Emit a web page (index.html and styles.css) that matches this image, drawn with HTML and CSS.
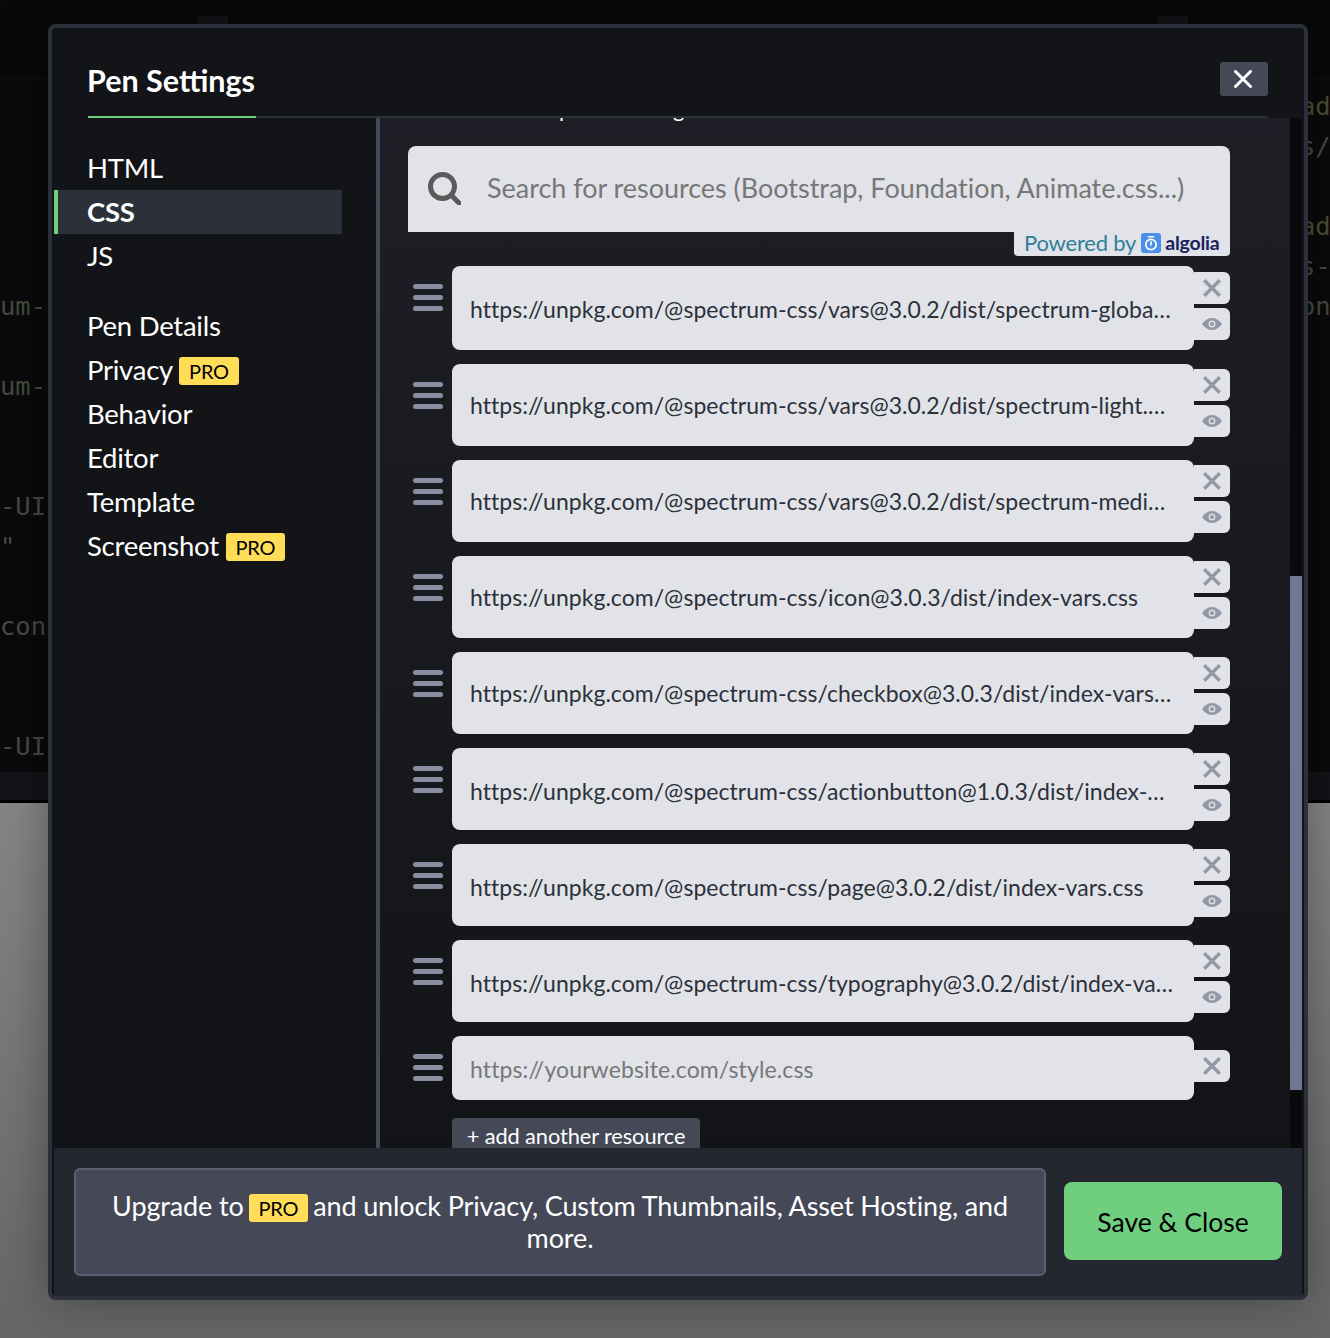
FILE: index.html
```html
<!DOCTYPE html>
<html lang="en">
<head>
<meta charset="utf-8">
<title>Pen Settings</title>
<link rel="stylesheet" href="styles.css">
</head>
<body>
<div class="page">
  <div class="editor">
    <div class="editor-top">
      <span class="stub stub-left"></span>
      <span class="stub stub-right"></span>
    </div>
    <div class="code">
      <pre class="code-left">





um-

um-


-UI
"

con


-UI</pre>
      <pre class="code-right"><span class="code-attr">ad</span>
s/

<span class="code-attr">ad</span>
s-
on</pre>
    </div>
    <div class="resizer"></div>
  </div>
  <div class="preview"></div>

  <section class="modal">
    <header class="modal-head">
      <h1 class="modal-title">Pen Settings</h1>
      <button class="close-btn" aria-label="Close">
        <svg width="18" height="18" viewBox="0 0 18 18"><path d="M1.500 1.500l15 15M16.500 1.500l-15 15" stroke="#fff" stroke-width="3" stroke-linecap="round"/></svg>
      </button>
    </header>
    <div class="modal-body">
      <nav class="side">
        <ul class="nav-group">
          <li class="nav-item">HTML</li>
          <li class="nav-item is-active">CSS</li>
          <li class="nav-item">JS</li>
        </ul>
        <ul class="nav-group">
          <li class="nav-item">Pen Details</li>
          <li class="nav-item">Privacy <span class="pro">PRO</span></li>
          <li class="nav-item">Behavior</li>
          <li class="nav-item">Editor</li>
          <li class="nav-item">Template</li>
          <li class="nav-item">Screenshot <span class="pro">PRO</span></li>
        </ul>
      </nav>
      <div class="panel">
        <div class="panel-inner">
          <p class="intro">Add external CSS pen links to go here</p>
          <div class="search">
            <svg class="search-icon" width="33" height="33" viewBox="0 0 33 33"><circle cx="14.500" cy="14.500" r="12" fill="none" stroke="#5a5a5a" stroke-width="5"/><path d="M23.500 23.500l7.500 7.500" stroke="#5a5a5a" stroke-width="5" stroke-linecap="round"/></svg>
            <span class="search-text">Search for resources (Bootstrap, Foundation, Animate.css...)</span>
          </div>
          <div class="powered-wrap">
            <div class="powered">
              <span class="powered-text">Powered by</span>
              <svg class="algolia-mark" width="20" height="20" viewBox="0 0 20 20"><rect width="20" height="20" rx="3" fill="#4b8fe8"/><circle cx="10" cy="11.500" r="5.200" fill="none" stroke="#fff" stroke-width="1.700"/><path d="M7.500 3.800h5M10 12V8.800" stroke="#fff" stroke-width="1.600" stroke-linecap="round"/></svg>
              <span class="algolia">algolia</span>
            </div>
          </div>
          <ul class="rows">
            <li class="row row-first row-low">
              <span class="handle"><i></i><i></i><i></i></span>
              <div class="url">https://unpkg.com/@spectrum-css/vars@3.0.2/dist/spectrum-global.css</div>
              <div class="row-btns">
                <span class="row-btn"><svg width="18" height="18" viewBox="0 0 18 18"><use href="#x"/></svg></span>
                <span class="row-btn"><svg width="20" height="14" viewBox="0 0 20 14"><use href="#eye"/></svg></span>
              </div>
            </li>
            <li class="row">
              <span class="handle"><i></i><i></i><i></i></span>
              <div class="url">https://unpkg.com/@spectrum-css/vars@3.0.2/dist/spectrum-light.css</div>
              <div class="row-btns">
                <span class="row-btn"><svg width="18" height="18" viewBox="0 0 18 18"><use href="#x"/></svg></span>
                <span class="row-btn"><svg width="20" height="14" viewBox="0 0 20 14"><use href="#eye"/></svg></span>
              </div>
            </li>
            <li class="row">
              <span class="handle"><i></i><i></i><i></i></span>
              <div class="url">https://unpkg.com/@spectrum-css/vars@3.0.2/dist/spectrum-medium.css</div>
              <div class="row-btns">
                <span class="row-btn"><svg width="18" height="18" viewBox="0 0 18 18"><use href="#x"/></svg></span>
                <span class="row-btn"><svg width="20" height="14" viewBox="0 0 20 14"><use href="#eye"/></svg></span>
              </div>
            </li>
            <li class="row">
              <span class="handle"><i></i><i></i><i></i></span>
              <div class="url">https://unpkg.com/@spectrum-css/icon@3.0.3/dist/index-vars.css</div>
              <div class="row-btns">
                <span class="row-btn"><svg width="18" height="18" viewBox="0 0 18 18"><use href="#x"/></svg></span>
                <span class="row-btn"><svg width="20" height="14" viewBox="0 0 20 14"><use href="#eye"/></svg></span>
              </div>
            </li>
            <li class="row">
              <span class="handle"><i></i><i></i><i></i></span>
              <div class="url">https://unpkg.com/@spectrum-css/checkbox@3.0.3/dist/index-vars.css</div>
              <div class="row-btns">
                <span class="row-btn"><svg width="18" height="18" viewBox="0 0 18 18"><use href="#x"/></svg></span>
                <span class="row-btn"><svg width="20" height="14" viewBox="0 0 20 14"><use href="#eye"/></svg></span>
              </div>
            </li>
            <li class="row row-low">
              <span class="handle"><i></i><i></i><i></i></span>
              <div class="url">https://unpkg.com/@spectrum-css/actionbutton@1.0.3/dist/index-vars.css</div>
              <div class="row-btns">
                <span class="row-btn"><svg width="18" height="18" viewBox="0 0 18 18"><use href="#x"/></svg></span>
                <span class="row-btn"><svg width="20" height="14" viewBox="0 0 20 14"><use href="#eye"/></svg></span>
              </div>
            </li>
            <li class="row row-low">
              <span class="handle"><i></i><i></i><i></i></span>
              <div class="url">https://unpkg.com/@spectrum-css/page@3.0.2/dist/index-vars.css</div>
              <div class="row-btns">
                <span class="row-btn"><svg width="18" height="18" viewBox="0 0 18 18"><use href="#x"/></svg></span>
                <span class="row-btn"><svg width="20" height="14" viewBox="0 0 20 14"><use href="#eye"/></svg></span>
              </div>
            </li>
            <li class="row row-low">
              <span class="handle"><i></i><i></i><i></i></span>
              <div class="url">https://unpkg.com/@spectrum-css/typography@3.0.2/dist/index-vars.css</div>
              <div class="row-btns">
                <span class="row-btn"><svg width="18" height="18" viewBox="0 0 18 18"><use href="#x"/></svg></span>
                <span class="row-btn"><svg width="20" height="14" viewBox="0 0 20 14"><use href="#eye"/></svg></span>
              </div>
            </li>
            <li class="row row-empty">
              <span class="handle"><i></i><i></i><i></i></span>
              <div class="url url-placeholder">https://yourwebsite.com/style.css</div>
              <div class="row-btns">
                <span class="row-btn"><svg width="18" height="18" viewBox="0 0 18 18"><use href="#x"/></svg></span>
              </div>
            </li>
          </ul>
          <div class="add-wrap"><button class="add-btn">+ add another resource</button></div>
        </div>
      </div>
      <div class="scrollbar"><div class="thumb"></div></div>
    </div>
    <footer class="modal-foot">
      <div class="upgrade">Upgrade to <span class="pro">PRO</span> and unlock Privacy, Custom Thumbnails, Asset Hosting, and more.</div>
      <button class="save-btn">Save &amp; Close</button>
    </footer>
  </section>
</div>
<svg class="defs" width="0" height="0" aria-hidden="true">
  <defs>
    <path id="x" d="M1.200 1.200l15.600 15.600M16.800 1.200L1.200 16.800" stroke="#9397a8" stroke-width="3.400" fill="none"/>
    <g id="eye">
      <path d="M0 7C3 2.800 6.500 1 10 1s7 1.800 10 6c-3 4.200-6.500 6-10 6S3 11.200 0 7z" fill="#9397a8"/>
      <circle cx="10" cy="7" r="3.500" fill="#dfe1e7"/>
      <circle cx="10" cy="7" r="2.100" fill="#9397a8"/>
    </g>
  </defs>
</svg>
</body>
</html>
```

FILE: styles.css
```css
* { box-sizing: border-box; }
html, body { margin: 0; height: 100%; }
body { font-family: "Lato", "Noto Sans", sans-serif; background: #808080; overflow: hidden; }
ul { list-style: none; margin: 0; padding: 0; }
button { font-family: inherit; border: 0; cursor: pointer; }

.page { position: relative; height: 1338px; display: flex; flex-direction: column; overflow: hidden; }

.editor { height: 803px; display: flex; flex-direction: column; background: #0a0a0c; }
.editor-top { height: 79px; display: flex; justify-content: space-between; padding: 16px 142px 0 198px; background: #09090b; border-bottom: 1px solid #101114; }
.stub { display: block; width: 30px; height: 8px; background: #131417; }
.code { flex: 1; display: flex; justify-content: space-between; overflow: hidden; padding-top: 7px; }
.code-left, .code-right { margin: 0; font-family: "DejaVu Sans Mono", monospace; font-size: 25.500px; line-height: 40px; color: #434c3e; }
.code-left { width: 48px; text-align: left; }
.code-right { width: 30px; overflow: hidden; }
.code-attr { color: #4f4c32; }
.resizer { height: 31px; background: #131417; border-bottom: 3px solid #000; }
.preview { flex: 1; background: linear-gradient(#868686, #666); }

.modal {
  position: absolute; left: 48px; top: 24px; width: 1260px; height: 1276px;
  display: flex; flex-direction: column;
  border: 4px solid #2c303a; border-radius: 8px; padding: 0 2px;
  background: #131417; color: #fff;
  box-shadow: 0 0 50px rgba(0, 0, 0, .35);
}
.modal-head { height: 90px; margin: 0 34px; display: flex; justify-content: space-between; align-items: flex-start; border-bottom: 2px solid #2c303a; flex: none; }
.modal-title { margin: 0 0 -2px; width: 168px; height: 90px; font-size: 30.500px; font-weight: 700; line-height: 36px; padding-top: 34px; border-bottom: 2px solid #6fcf7f; white-space: nowrap; text-indent: -1px; }
.close-btn { margin-top: 34px; width: 48px; height: 34px; background: #444857; border-radius: 3px; display: flex; align-items: center; justify-content: center; padding: 0 2px 0 0; }

.modal-body { flex: 1; display: flex; min-height: 0; }
.side { width: 326px; flex: none; padding: 28px 34px 0 0; border-right: 4px solid #444857; display: flex; flex-direction: column; gap: 26px; }
.nav-item { height: 44px; padding-left: 29px; border-left: 4px solid transparent; font-size: 27.500px; line-height: 44px; letter-spacing: -.25px; white-space: nowrap; }
.nav-item.is-active { background: #2c303a; border-left-color: #6fcf7f; font-weight: 700; }

.pro { display: inline-block; background: #ffdd57; color: #000; border-radius: 3px; font-size: 20px; line-height: 28px; height: 28px; padding: 0 10px; vertical-align: 1px; font-weight: 400; letter-spacing: -.2px; }

.panel { flex: 1; min-width: 0; overflow: hidden; background: linear-gradient(#1e1f26, #131417); }
.panel-inner { margin-top: -27px; padding: 0 60px 0 28px; }
.intro { margin: 0 0 19px; height: 36px; line-height: 36px; font-size: 22px; color: #fff; white-space: nowrap; overflow: hidden; text-indent: -19px; word-spacing: -1px; }

.search { height: 86px; display: flex; align-items: center; gap: 26px; padding-left: 20px; background: #e1e3e8; border-radius: 8px 8px 0 0; }
.search-icon { flex: none; margin-bottom: 2px; }
.search-text { font-size: 27px; line-height: 32px; padding-bottom: 2px; color: #777; white-space: nowrap; letter-spacing: -.03px; }
.powered-wrap { display: flex; justify-content: flex-end; }
.powered { width: 216px; height: 24px; display: flex; align-items: center; padding: 0 0 3px 10px; background: #e1e3e8; border-radius: 0 0 4px 4px; }
.powered-text { font-size: 22px; line-height: 22px; color: #2f7f99; margin-right: 5px; letter-spacing: -.2px; }
.algolia-mark { flex: none; margin-right: 4px; }
.algolia { font-size: 19.500px; line-height: 22px; font-weight: 700; color: #1a2360; letter-spacing: -.2px; }

.rows { margin-top: 10px; display: flex; flex-direction: column; gap: 14px; }
.row { height: 82px; display: flex; align-items: center; }
.row-first { height: 84px; }
.row-empty { height: 64px; }
.handle { align-self: flex-start; width: 44px; padding: 18px 9px 0 5px; display: flex; flex-direction: column; gap: 6px; flex: none; }
.handle i { display: block; height: 5px; border-radius: 2.500px; background: #8a8ea3; }
.url { flex: 1; min-width: 0; height: 100%; padding: 0 20px 0 18px; background: #e1e3e8; color: #2c303a; border-radius: 8px; font-size: 23px; line-height: 82px; white-space: nowrap; overflow: hidden; text-overflow: ellipsis; letter-spacing: .03px; }
.row-low .url { line-height: 86px; }
.row-empty .url { line-height: 66px; }
.url-placeholder { color: #777; letter-spacing: .12px; }
.row-btns { width: 36px; flex: none; display: flex; flex-direction: column; gap: 4px; margin-bottom: 4px; }
.row-btn { height: 32px; background: #e1e3e8; border-radius: 0 6px 6px 0; display: flex; align-items: center; justify-content: center; }
.add-wrap { margin: 18px 0 0 44px; height: 60px; }
.add-btn { height: 60px; width: 248px; padding: 0 0 24px; background: #444857; color: #fff; border-radius: 4px; font-size: 21.800px; line-height: 30px; letter-spacing: -.1px; white-space: nowrap; }

.scrollbar { width: 12px; flex: none; padding-top: 458px; background: #0a0a0c; }
.thumb { height: 514px; background: #717790; }

.modal-foot { height: 148px; flex: none; display: flex; align-items: flex-start; padding: 20px 20px 0; gap: 18px; background: #24272f; }
.upgrade { width: 972px; height: 108px; flex: none; padding: 20px 32px 0; background: #444857; border: 2px solid #5a5f73; border-radius: 6px; font-size: 27px; line-height: 32px; text-align: center; letter-spacing: -.12px; }
.upgrade .pro { vertical-align: 0; margin: 0 -2px; }
.save-btn { width: 218px; height: 78px; margin-top: 14px; padding: 2px 0 0; background: #6fcf7f; color: #000; border-radius: 8px; font-size: 26.500px; }
.defs { position: absolute; }
```
